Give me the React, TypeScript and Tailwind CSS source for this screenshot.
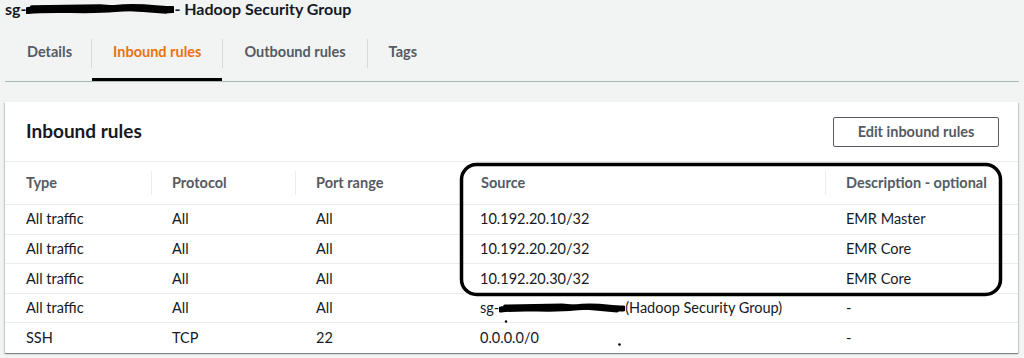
import React from "react";

type Rule = { type: string; protocol: string; port: string; source: React.ReactNode; description: string };

const font = { fontFamily: "Lato, 'Noto Sans', Arial, sans-serif" };

function Scribble({ width, height }: { width: number; height: number }) {
  // redaction marker drawn over the id
  return (
    <svg width={width} height={height} viewBox={`0 0 ${width} ${height}`} className="inline-block shrink-0">
      <path
        d={`M2 ${height / 2 + 1} C ${width * 0.2} ${height / 2 - 2}, ${width * 0.4} ${height / 2 + 2}, ${width * 0.6} ${height / 2 - 1} S ${width * 0.9} ${height / 2 + 1}, ${width - 2} ${height / 2}`}
        stroke="#000"
        strokeWidth={height * 0.55}
        strokeLinecap="round"
        fill="none"
      />
      <path
        d={`M6 ${height / 2 - 2} L ${width * 0.5} ${height / 2 - 3} L ${width - 8} ${height / 2 + 2}`}
        stroke="#000"
        strokeWidth={height * 0.35}
        strokeLinecap="round"
        fill="none"
      />
    </svg>
  );
}

const RULES: Rule[] = [
  { type: "All traffic", protocol: "All", port: "All", source: "10.192.20.10/32", description: "EMR Master" },
  { type: "All traffic", protocol: "All", port: "All", source: "10.192.20.20/32", description: "EMR Core" },
  { type: "All traffic", protocol: "All", port: "All", source: "10.192.20.30/32", description: "EMR Core" },
  {
    type: "All traffic",
    protocol: "All",
    port: "All",
    source: (
      <span className="flex items-center">
        sg-
        <Scribble width={126} height={11} />
        (Hadoop Security Group)
      </span>
    ),
    description: "-",
  },
  { type: "SSH", protocol: "TCP", port: "22", source: "0.0.0.0/0", description: "-" },
];

const COLS = ["Type", "Protocol", "Port range", "Source", "Description - optional"];
const TABS = ["Details", "Inbound rules", "Outbound rules", "Tags"];

export default function App() {
  return (
    <div className="relative w-[1024px] h-[358px] overflow-hidden bg-[#f2f3f3] text-[#16191f]" style={font}>
      {/* Title */}
      <div className="h-[20px] pl-[5px] flex items-center text-[16px] font-bold leading-none -mt-[1px]">
        sg-
        <Scribble width={148} height={13} />
        - Hadoop Security Group
      </div>

      {/* Tabs */}
      <div className="mx-[5px] h-[63px] pt-[6px] flex border-b border-[#aab7b8]">
        {TABS.map((t, i) => (
          <React.Fragment key={t}>
            {i > 0 && <div className="self-center w-px h-[29px] bg-[#d5dbdb]" />}
            <div
              className={`h-full flex items-center text-[14.5px] font-bold border-b-[3px] -mb-px ${
                i === 0 ? "pl-[22px] pr-[19px]" : "px-[21px]"
              } ${i === 1 ? "text-[#ec7211] border-black" : "text-[#545b64] border-transparent"}`}
            >
              {t}
            </div>
          </React.Fragment>
        ))}
      </div>

      {/* Card */}
      <div className="mt-[20px] ml-[5px] w-[1013px] bg-white shadow-[0_1px_1px_0_rgba(0,28,36,0.3),1px_1px_1px_0_rgba(0,28,36,0.15),-1px_1px_1px_0_rgba(0,28,36,0.15)]">
        <div className="h-[60px] flex items-center justify-between pl-[21px] pr-[19px] border-b border-[#eaeded]">
          <h2 className="text-[19px] font-bold">Inbound rules</h2>
          <button className="w-[166px] h-[30px] border border-[#545b64] rounded-[2px] bg-white text-[14.5px] font-bold text-[#545b64]">
            Edit inbound rules
          </button>
        </div>

        <div className="grid grid-cols-[146px_144px_165px_365px_1fr]">
          {COLS.map((c, i) => (
            <div key={c} className="h-[43px] flex items-center border-b border-[#eaeded] text-[14.5px] font-bold text-[#545b64]">
              {i > 0 && <div className="w-px h-[24px] bg-[#eaeded]" />}
              <span className={i > 0 ? "pl-[20px]" : "pl-[21px]"}>{c}</span>
            </div>
          ))}
          {RULES.map((r, ri) =>
            [r.type, r.protocol, r.port, r.source, r.description].map((v, ci) => (
              <div
                key={`${ri}-${ci}`}
                className={`h-[29.6px] flex items-center text-[14.5px] ${ci === 3 ? "pl-[20px]" : "pl-[21px]"} ${
                  ri < RULES.length - 1 ? "border-b border-[#eaeded]" : ""
                }`}
              >
                {v}
              </div>
            ))
          )}
        </div>
      </div>

      {/* Annotation drawn over the screenshot */}
      <svg className="absolute inset-0 pointer-events-none" width="1024" height="358" viewBox="0 0 1024 358">
        <rect x="461.5" y="164.5" width="539" height="130" rx="15" fill="none" stroke="#000" strokeWidth="3.5" />
        <circle cx="506" cy="321.5" r="1.2" fill="#000" />
        <circle cx="619.5" cy="344.5" r="1.3" fill="#000" />
      </svg>
    </div>
  );
}
